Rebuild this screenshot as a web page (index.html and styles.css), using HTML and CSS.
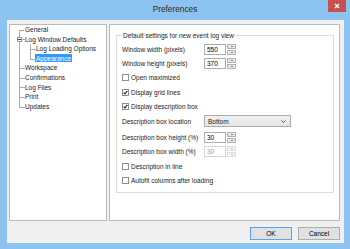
FILE: index.html
```html
<!DOCTYPE html>
<html lang="en">
<head>
    <meta charset="UTF-8">
    <title>Preferences</title>
    <link rel="stylesheet" href="styles.css">
</head>
<body>

    <div class="window">

        <!-- Title bar -->
        <div class="titlebar">
            <span></span>
            <div class="title">Preferences</div>
            <div class="close">
                <svg width="6" height="6" viewBox="0 0 6 6"><path d="M1 1L5 5M5 1L1 5" stroke="#fff" stroke-width="1.4"/></svg>
            </div>
        </div>

        <!-- Dialog body -->
        <div class="client">
            <div class="panes">

                <!-- Category tree -->
                <div class="tree-panel">
                    <ul class="tree">
                        <li><div class="node">General</div></li>
                        <li>
                            <span class="toggle"></span>
                            <div class="node">Log Window Defaults</div>
                            <ul>
                                <li><div class="node">Log Loading Options</div></li>
                                <li><div class="node"><span class="selected">Appearance</span></div></li>
                            </ul>
                        </li>
                        <li><div class="node">Workspace</div></li>
                        <li><div class="node">Confirmations</div></li>
                        <li><div class="node">Log Files</div></li>
                        <li><div class="node">Print</div></li>
                        <li><div class="node">Updates</div></li>
                    </ul>
                </div>

                <!-- Settings -->
                <div class="settings-panel">
                    <fieldset class="group">
                        <legend>Default settings for new event log view</legend>

                        <div class="row">
                            <label>Window width (pixels)</label>
                            <div class="spin">
                                <input class="field" type="text" value="550">
                                <div class="spin-btns">
                                    <span class="up"></span>
                                    <span class="down"></span>
                                </div>
                            </div>
                        </div>
                        <div class="row">
                            <label>Window height (pixels)</label>
                            <div class="spin">
                                <input class="field" type="text" value="370">
                                <div class="spin-btns">
                                    <span class="up"></span>
                                    <span class="down"></span>
                                </div>
                            </div>
                        </div>

                        <div class="row">
                            <span class="check"></span>Open maximized
                        </div>
                        <div class="row">
                            <span class="check checked"><svg width="5" height="5" viewBox="0 0 5 5"><path d="M0.6 2.6L1.9 3.9L4.4 0.9" fill="none" stroke="#222" stroke-width="1.1"/></svg></span>Display grid lines
                        </div>
                        <div class="row">
                            <span class="check checked"><svg width="5" height="5" viewBox="0 0 5 5"><path d="M0.6 2.6L1.9 3.9L4.4 0.9" fill="none" stroke="#222" stroke-width="1.1"/></svg></span>Display description box
                        </div>

                        <div class="row">
                            <label>Description box location</label>
                            <div class="select">
                                <span>Bottom</span>
                                <svg width="5" height="3" viewBox="0 0 5 3"><path d="M0.5 0.5L2.5 2.5L4.5 0.5" fill="none" stroke="#444" stroke-width="0.9"/></svg>
                            </div>
                        </div>

                        <div class="row spaced">
                            <label>Description box height (%)</label>
                            <div class="spin">
                                <input class="field" type="text" value="30">
                                <div class="spin-btns">
                                    <span class="up"></span>
                                    <span class="down"></span>
                                </div>
                            </div>
                        </div>
                        <div class="row">
                            <label>Description box width (%)</label>
                            <div class="spin disabled">
                                <input class="field" type="text" value="30" disabled>
                                <div class="spin-btns">
                                    <span class="up"></span>
                                    <span class="down"></span>
                                </div>
                            </div>
                        </div>

                        <div class="row">
                            <span class="check"></span>Description in line
                        </div>
                        <div class="row">
                            <span class="check"></span>Autofit columns after loading
                        </div>
                    </fieldset>
                </div>
            </div>

            <!-- Dialog buttons -->
            <div class="buttons">
                <button class="btn default">OK</button>
                <button class="btn">Cancel</button>
            </div>
        </div>
    </div>

</body>
</html>
```

FILE: styles.css
```css
/* General Styles */
* {
    margin: 0;
    padding: 0;
    box-sizing: border-box;
}
body {
    background: #8dc3f0;
    font-family: "Liberation Sans", Arial, sans-serif;
    font-size: 6.5px;
    color: #1a1a1a;
}

/* Window frame */
.window {
    width: 350px;
    height: 249px;
    display: flex;
    flex-direction: column;
}
.titlebar {
    height: 20px;
    display: grid;
    grid-template-columns: 1fr auto 1fr;
    align-items: start;
}
.title {
    font-size: 8.3px;
    color: #2b2b2b;
    line-height: 18px;
}
.close {
    justify-self: end;
    margin-right: 4px;
    width: 18px;
    height: 12px;
    background: #c75050;
    display: flex;
    align-items: center;
    justify-content: center;
}

/* Client area */
.client {
    margin: 0 6px 0 7px;
    height: 223px;
    background: #f0f0f0;
    padding: 4px 4px 0 2px;
}
.panes {
    display: flex;
    gap: 2px;
    height: 197px;
}

/* Tree */
.tree-panel {
    width: 98px;
    background: #fff;
    border: 1px solid #bababa;
}
.tree {
    list-style: none;
    padding: 0 0 0 15px;
}
.tree ul {
    list-style: none;
    padding-left: 11px;
}
.tree li {
    position: relative;
}
.tree li::before {
    content: "";
    position: absolute;
    left: -6px;
    top: 0;
    width: 5px;
    height: 4.8px;
    border-left: 1px solid #ababab;
    border-bottom: 1px solid #ababab;
}
.tree li::after {
    content: "";
    position: absolute;
    left: -6px;
    top: 4.8px;
    bottom: 0;
    border-left: 1px solid #ababab;
}
.tree > li:first-child::before {
    border-left: none;
}
.tree li:last-child::after {
    display: none;
}
.tree .node {
    height: 9.6px;
    line-height: 9.6px;
    white-space: nowrap;
}
.toggle {
    position: absolute;
    left: -8px;
    top: 2.3px;
    width: 5px;
    height: 5px;
    border: 1px solid #959595;
    background: linear-gradient(#444, #444) center / 3px 1px no-repeat, #fff;
    z-index: 1;
}
.selected {
    background: #3399ff;
    color: #fff;
    padding: 0.5px 1px;
    margin-left: -1px;
}

/* Settings panel */
.settings-panel {
    width: 231px;
    background: #fff;
    border: 1px solid #bababa;
    padding: 6px 5px 0 6px;
}
.group {
    border: 1px solid #dcdcdc;
    padding: 2px 4px 4px 5px;
}
.group legend {
    padding: 0 1px;
    line-height: 9px;
}
.row {
    display: flex;
    align-items: center;
    height: 14.4px;
    white-space: nowrap;
}
.row.spaced {
    margin-top: 2px;
}
.row label {
    width: 82px;
}

/* Spinners */
.spin {
    display: flex;
    gap: 1px;
}
.field {
    width: 22px;
    height: 11px;
    border: 1px solid #abadb3;
    background: #fff;
    font: inherit;
    color: #000;
    padding: 0 0 0 2px;
    line-height: 9px;
}
.spin-btns {
    display: flex;
    flex-direction: column;
    gap: 1px;
    width: 9px;
}
.spin-btns span {
    height: 5px;
    border: 1px solid #b4b4b4;
    background: #e6e6e6;
    display: flex;
    align-items: center;
    justify-content: center;
}
.spin-btns span::before {
    content: "";
    border-left: 1.5px solid transparent;
    border-right: 1.5px solid transparent;
}
.spin-btns .up::before {
    border-bottom: 1.5px solid #222;
}
.spin-btns .down::before {
    border-top: 1.5px solid #222;
}
.spin.disabled .field {
    color: #9a9a9a;
    border-color: #d4d4d4;
}
.spin.disabled .spin-btns span {
    border-color: #dddddd;
    background: #f4f4f4;
}
.spin.disabled .spin-btns .up::before {
    border-bottom-color: #9a9a9a;
}
.spin.disabled .spin-btns .down::before {
    border-top-color: #9a9a9a;
}

/* Checkboxes */
.check {
    width: 7px;
    height: 7px;
    border: 1px solid #8f8f8f;
    background: #fff;
    margin-right: 2px;
    display: flex;
    align-items: center;
    justify-content: center;
}

/* Dropdown */
.select {
    width: 87px;
    height: 12px;
    border: 1px solid #acacac;
    background: linear-gradient(#f0f0f0, #e5e5e5);
    display: flex;
    align-items: center;
    justify-content: space-between;
    padding: 0 4px 0 3px;
}

/* Buttons */
.buttons {
    display: flex;
    justify-content: flex-end;
    gap: 6px;
    margin-top: 6px;
}
.btn {
    width: 42px;
    height: 13px;
    font: inherit;
    color: #000;
    background: #e1e1e1;
    border: 1px solid #adadad;
}
.btn.default {
    border-color: #5ba2e8;
}
```
